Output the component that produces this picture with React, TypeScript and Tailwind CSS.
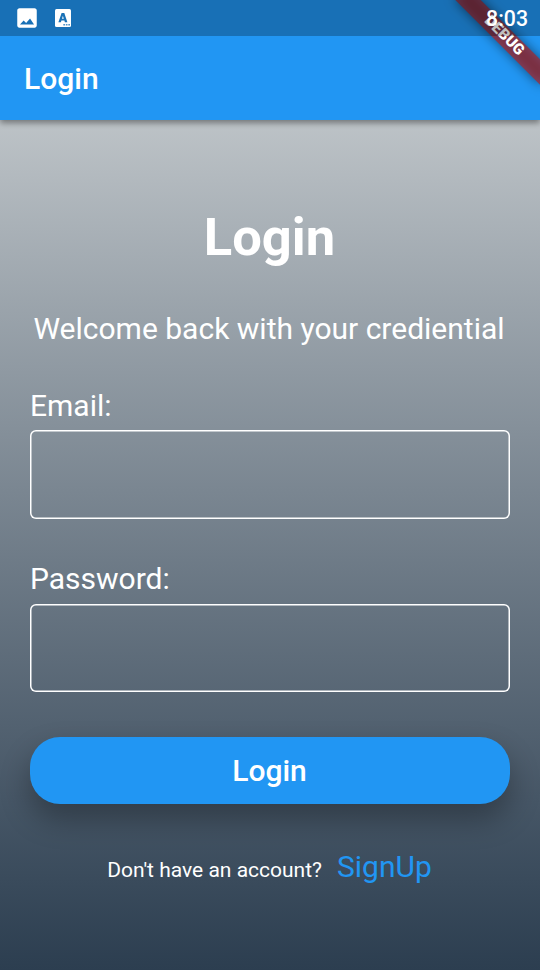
import React from "react";

function StatusBar() {
  return (
    <div className="absolute inset-x-0 top-0 z-20 flex h-9 items-center bg-black/25 pl-[14px] pr-[12px]">
      <svg className="h-[26px] w-[26px]" viewBox="0 0 24 24" fill="white">
        <path d="M21 19V5c0-1.1-.9-2-2-2H5c-1.1 0-2 .9-2 2v14c0 1.1.9 2 2 2h14c1.1 0 2-.9 2-2zM8.900 14.200l2.300 2.500L14.800 12.500l3.700 5.500H5.500l3.400-3.800z" />
      </svg>
      <svg className="ml-[15px] h-[18px] w-[16px]" viewBox="0 0 16 18">
        <rect width="16" height="18" rx="1.5" fill="white" />
        <path
          fill="#1971b6"
          fillRule="evenodd"
          d="M6.600 4h2.700l3.100 9.200h-2.500l-.5-1.700H6.400l-.5 1.700H3.400L6.600 4zM7.900 6.800 7 9.800h1.800z"
        />
        <path
          fill="#1971b6"
          fillOpacity="0.75"
          d="M8.300 15h1.700v1.500H8.300zM10.800 15h1.700v1.500h-1.700zM13.300 15H15v1.500h-1.700z"
        />
      </svg>
      <span className="ml-auto pt-[2px] text-[21.3px] font-medium leading-none text-white">8:03</span>
    </div>
  );
}

function DebugBanner() {
  return (
    <div className="absolute left-[444px] top-[27px] z-10 h-[18px] w-[120px] rotate-45">
      <div className="absolute inset-0 bg-black/50 blur-[6px]" />
      <div className="relative flex h-full items-center justify-center bg-[#b71c1c]/63">
        <span className="text-[15.3px] font-black leading-none text-white">DEBUG</span>
      </div>
    </div>
  );
}

function Field({ label, type, box }: { label: string; type: string; box: string }) {
  return (
    <label className="flex flex-col">
      <span className="text-[30px] leading-[35px]">{label}</span>
      <input
        type={type}
        className={`${box} rounded-[6px] bg-transparent px-4 shadow-[inset_0_0_0_1.5px_#fff] outline-none`}
      />
    </label>
  );
}

export default function App() {
  return (
    <div className="relative flex h-[970px] w-[540px] flex-col overflow-hidden font-['Roboto',sans-serif] text-white">
      <StatusBar />
      <DebugBanner />
      <header className="relative flex h-[120px] shrink-0 items-center bg-[#2196f3] pl-6 pt-9 shadow-[0_3px_6px_rgba(0,0,0,0.4)]">
        <h1 className="text-[30px] font-medium leading-[35px]">Login</h1>
      </header>
      <main className="flex flex-1 flex-col bg-linear-to-b from-[#bdc3c7] to-[#2c3e50] px-[30px] pt-[87px]">
        <h2 className="pr-px text-center text-[52.5px] font-bold leading-[61px]">Login</h2>
        <p className="mt-[43px] whitespace-nowrap pr-[2px] text-center text-[30px] leading-[35px]">
          Welcome back with your crediential
        </p>
        <div className="mt-[42px] flex flex-col gap-[42px]">
          <Field label="Email:" type="email" box="mt-[7px] h-[89px]" />
          <Field label="Password:" type="password" box="mt-[7.5px] h-[88.5px]" />
        </div>
        <button className="mt-[45px] h-[67px] shrink-0 rounded-[30px] bg-[#2196f3] pr-px text-[30px] font-medium shadow-[0_15px_30px_rgba(0,0,0,0.3)]">
          Login
        </button>
        <div className="mt-[45px] flex items-baseline justify-center gap-[15px] pr-px">
          <span className="text-[21px]">Don't have an account?</span>
          <a className="text-[30px] leading-[35px] text-[#2196f3]">SignUp</a>
        </div>
      </main>
    </div>
  );
}
